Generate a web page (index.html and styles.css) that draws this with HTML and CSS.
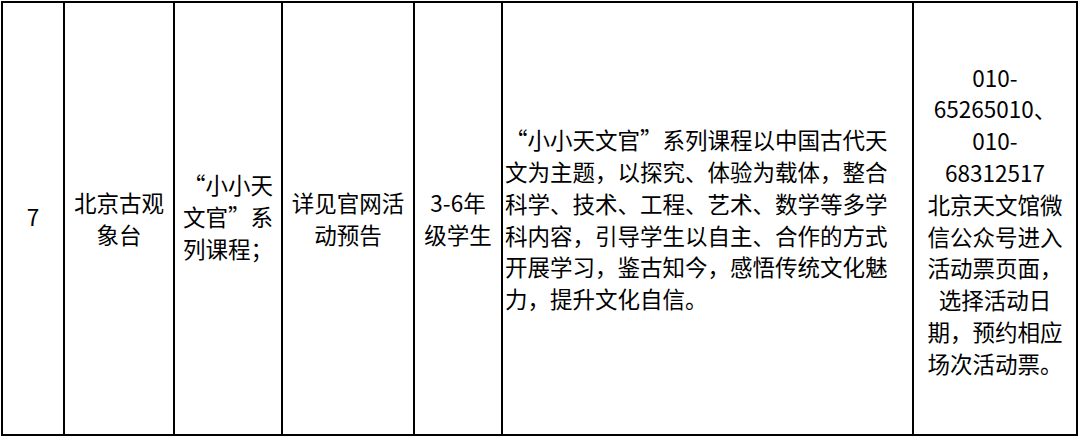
FILE: index.html
```html
<!DOCTYPE html>
<html lang="zh-CN">
<head>
<meta charset="utf-8">
<title>活动信息</title>
<link rel="stylesheet" href="styles.css">
</head>
<body>
<div class="sheet">
  <div class="row">
    <div class="cell c-no">7</div>
    <div class="cell c-venue">北京古观象台</div>
    <div class="cell c-course">“小小天文官”系列课程；</div>
    <div class="cell c-time">详见官网活动预告</div>
    <div class="cell c-age">3-6年<br>级学生</div>
    <div class="cell c-desc">“小小天文官”系列课程以中国古代天文为主题，以探究、体验为载体，整合科学、技术、工程、艺术、数学等多学科内容，引导学生以自主、合作的方式开展学习，鉴古知今，感悟传统文化魅力，提升文化自信。</div>
    <div class="cell c-book">010-<br>65265010、<br>010-<br>68312517<br>北京天文馆微<br>信公众号进入<br>活动票页面，<br>选择活动日<br>期，预约相应<br>场次活动票。</div>
  </div>
</div>
</body>
</html>
```

FILE: styles.css
```css
html, body {
  margin: 0;
  padding: 0;
  background: #ffffff;
}

body {
  font-family: "Noto Sans CJK SC", "Noto Sans", sans-serif;
  font-size: 22.5px;
  line-height: 31.8px;
  color: #000000;
}

.sheet {
  padding: 1px 0 0 1px;
}

.row {
  display: grid;
  grid-template-columns: 60px 110px 108px 132px 88px 411px 164px;
  width: 1077px;
  height: 435px;
  box-sizing: border-box;
  border: 2px solid #000;
}

.cell {
  display: flex;
  align-items: center;
  justify-content: center;
  text-align: center;
  box-sizing: border-box;
  border-left: 2px solid #000;
  padding: 0 4px;
}

.c-no {
  border-left: 0;
  padding-bottom: 4px;
}

.c-course {
  padding-bottom: 3px;
}

.c-desc {
  justify-content: flex-start;
  text-align: left;
  padding: 2px 12px 0 2px;
}

.c-book {
  padding: 4px 4px 0 4px;
}
```
